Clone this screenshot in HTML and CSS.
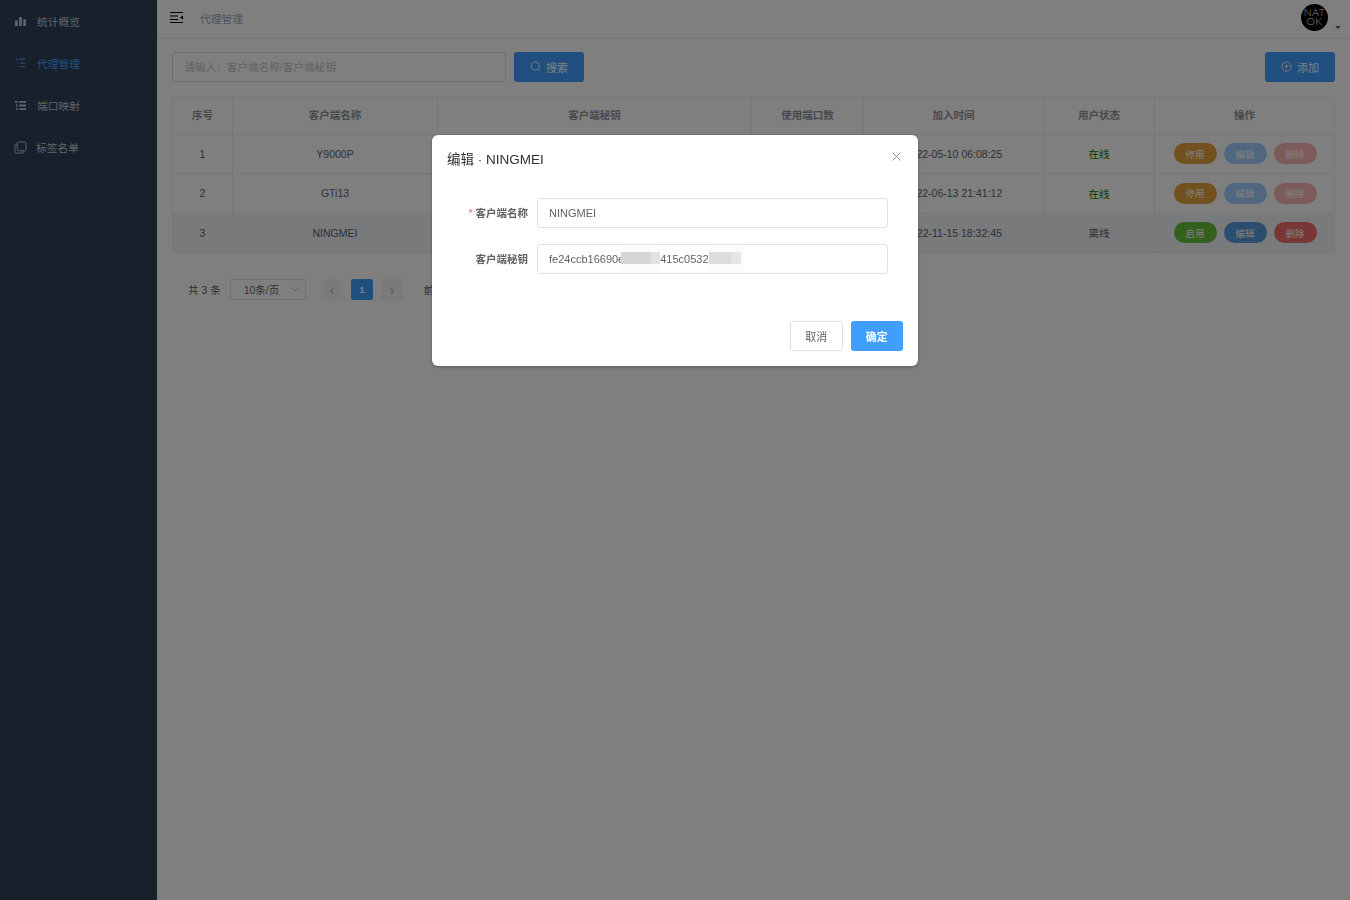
FILE: index.html
```html
<!DOCTYPE html>
<html lang="zh-CN">
<head>
  <meta charset="UTF-8">
  <title>代理管理</title>
  <link rel="stylesheet" href="styles.css">
</head>
<body>
  <div class="container">
    <div class="sidebar">
      <a href="#" class="menu-item">
        <svg class="menu-icon" viewBox="0 0 12 12"><path d="M0 5h3v6H0zM4.500 1h3v10h-3zM9 3.500h3V11H9z" fill="currentColor"/></svg>
        <span>统计概览</span>
      </a>
      <a href="#" class="menu-item active">
        <svg class="menu-icon" viewBox="0 0 12 12"><path d="M1 1.500h2M5 1.500h6M3 5.500h1M6 5.500h5M3 9.500h1M6 9.500h5" stroke="currentColor" stroke-width="1.300" fill="none"/></svg>
        <span>代理管理</span>
      </a>
      <a href="#" class="menu-item">
        <svg class="menu-icon" viewBox="0 0 12 12"><path d="M0 1h3v2H0zM4.500 1H12v2H4.500zM1 5h2v2H1zM4.500 5H12v2H4.500zM1 9h2v2H1zM4.500 9H12v2H4.500z" fill="currentColor"/></svg>
        <span>端口映射</span>
      </a>
      <a href="#" class="menu-item menu-item-tight">
        <svg class="menu-icon menu-icon-big" viewBox="0 0 14 14"><rect x="3.500" y="1" width="9.500" height="9.500" rx="1.500" fill="none" stroke="currentColor"/><path d="M3.500 3.500H2.500A1.500 1.500 0 0 0 1 5v6.500A1.500 1.500 0 0 0 2.500 13H9a1.500 1.500 0 0 0 1.500-1.500v-1" fill="none" stroke="currentColor"/></svg>
        <span>标签名单</span>
      </a>
    </div>

    <div class="main">
      <div class="navbar">
        <svg class="hamburger" viewBox="0 0 13 11"><path d="M0 .5h13M0 4h8M0 7.500h8M0 10.500h13" stroke="#000" stroke-width="1.100" fill="none"/><path d="M13 3.500v4l-3-2z" fill="#000"/></svg>
        <span class="crumb">代理管理</span>
        <div class="avatar-wrap">
          <div class="avatar"><span>NAT</span><span>OK</span></div>
          <span class="caret"></span>
        </div>
      </div>

      <div class="content">
        <div class="toolbar">
          <input class="search-input" type="text" placeholder="请输入：客户端名称/客户端秘钥">
          <button class="btn btn-primary search-btn">
            <svg class="btn-icon" viewBox="0 0 12 12"><circle cx="5.800" cy="5.500" r="4.500" fill="none" stroke="currentColor"/><path d="M9 9l1.800 1.800" stroke="currentColor"/></svg>
            搜索
          </button>
          <button class="btn btn-primary add-btn">
            <svg class="btn-icon" viewBox="0 0 12 12"><circle cx="6" cy="6" r="5" fill="none" stroke="currentColor"/><path d="M6 3.500v5M3.500 6h5" stroke="currentColor"/></svg>
            添加
          </button>
        </div>

        <table class="data-table">
          <colgroup>
            <col class="col-no"><col class="col-name"><col class="col-key"><col class="col-ports"><col class="col-time"><col class="col-state"><col class="col-ops">
          </colgroup>
          <thead>
            <tr><th>序号</th><th>客户端名称</th><th>客户端秘钥</th><th>使用端口数</th><th>加入时间</th><th>用户状态</th><th>操作</th></tr>
          </thead>
          <tbody>
            <tr>
              <td>1</td><td>Y9000P</td><td></td><td></td><td>2022-05-10 06:08:25</td>
              <td class="online">在线</td>
              <td><div class="ops"><button class="pill pill-warning">停用</button><button class="pill pill-edit-off">编辑</button><button class="pill pill-del-off">删除</button></div></td>
            </tr>
            <tr>
              <td>2</td><td>GTi13</td><td></td><td></td><td>2022-06-13 21:41:12</td>
              <td class="online">在线</td>
              <td><div class="ops"><button class="pill pill-warning">停用</button><button class="pill pill-edit-off">编辑</button><button class="pill pill-del-off">删除</button></div></td>
            </tr>
            <tr class="row-hover">
              <td>3</td><td>NINGMEI</td><td></td><td></td><td>2022-11-15 18:32:45</td>
              <td>离线</td>
              <td><div class="ops"><button class="pill pill-success">启用</button><button class="pill pill-edit">编辑</button><button class="pill pill-del">删除</button></div></td>
            </tr>
          </tbody>
        </table>

        <div class="pagination">
          <span class="total">共 3 条</span>
          <div class="page-size">10条/页<svg class="chevron" viewBox="0 0 8 5"><path d="M.5.500L4 4 7.500.500" fill="none" stroke="#c0c4cc"/></svg></div>
          <button class="page-btn">‹</button>
          <button class="page-btn page-current">1</button>
          <button class="page-btn">›</button>
          <span class="jump">前往 1 页</span>
        </div>
      </div>
    </div>
  </div>

  <div class="mask">
    <div class="dialog">
      <div class="dialog-header">
        <span class="dialog-title">编辑 · NINGMEI</span>
        <svg class="dialog-close" viewBox="0 0 9 9"><path d="M.5.500l8 8M8.500.500l-8 8" stroke="#909399" fill="none"/></svg>
      </div>
      <div class="dialog-body">
        <div class="form-item">
          <label class="form-label"><span class="required">*</span>客户端名称</label>
          <div class="form-input">NINGMEI</div>
        </div>
        <div class="form-item">
          <label class="form-label">客户端秘钥</label>
          <div class="form-input">fe24ccb16690e<span class="redact redact-a"></span>415c0532<span class="redact redact-b"></span></div>
        </div>
      </div>
      <div class="dialog-footer">
        <button class="btn btn-default">取消</button>
        <button class="btn btn-confirm">确定</button>
      </div>
    </div>
  </div>
</body>
</html>
```

FILE: styles.css
```css
* {
  box-sizing: border-box;
}

html, body {
  margin: 0;
  padding: 0;
  height: 100%;
  font-family: "Liberation Sans", "Noto Sans CJK SC", sans-serif;
  font-size: 10.5px;
  color: #606266;
  background-color: #fff;
}

button {
  font-family: inherit;
}

.container {
  display: flex;
  min-height: 100vh;
}

.sidebar {
  width: 157px;
  flex-shrink: 0;
  background-color: #304156;
}

.menu-item {
  display: flex;
  align-items: center;
  height: 42px;
  padding-left: 15px;
  gap: 11px;
  font-size: 10.75px;
  color: #bfcbd9;
  text-decoration: none;
}

.menu-item.active {
  color: #409eff;
}

.menu-item-tight {
  padding-left: 14px;
  gap: 9px;
}

.menu-icon {
  width: 11px;
  height: 11px;
}

.menu-icon-big {
  width: 13px;
  height: 13px;
}

.main {
  flex: 1;
  min-width: 0;
}

.navbar {
  display: flex;
  align-items: center;
  height: 38px;
  padding-left: 13px;
  border-bottom: 1px solid #f0f0f0;
  box-shadow: 0 1px 3px rgba(0, 21, 41, 0.05);
}

.hamburger {
  width: 13px;
  height: 11px;
  margin-top: -2px;
}

.crumb {
  margin-left: 17px;
  color: #97a8be;
  font-size: 10.75px;
}

.avatar-wrap {
  margin-left: auto;
  display: flex;
  align-items: flex-end;
  margin-right: 9px;
  margin-top: -3px;
}

.avatar {
  width: 27px;
  height: 27px;
  border-radius: 50%;
  background-color: #000;
  color: #fff;
  display: flex;
  flex-direction: column;
  align-items: center;
  justify-content: center;
  font-family: Lato, "Liberation Sans", sans-serif;
  font-weight: 300;
  font-size: 10.5px;
  line-height: 9.500px;
  letter-spacing: 0.5px;
}

.caret {
  width: 0;
  height: 0;
  margin-left: 7px;
  margin-bottom: 2px;
  border-left: 3px solid transparent;
  border-right: 3px solid transparent;
  border-top: 3.500px solid #606266;
}

.content {
  padding: 14px 15px 0;
}

.toolbar {
  display: flex;
  align-items: center;
  margin-bottom: 15px;
}

.search-input {
  width: 334px;
  height: 30px;
  padding: 0 11.500px;
  border: 1px solid #dcdfe6;
  border-radius: 3px;
  font-family: inherit;
  font-size: 10.6px;
  outline: none;
}

.search-input::placeholder {
  color: #c0c4cc;
}

.btn {
  height: 30px;
  border-radius: 3px;
  border: 1px solid transparent;
  font-size: 11px;
  display: inline-flex;
  align-items: center;
  justify-content: center;
}

.btn-primary {
  width: 70px;
  gap: 5px;
  padding-bottom: 2px;
  background-color: #409eff;
  color: #fff;
}

.btn-icon {
  width: 11px;
  height: 11px;
}

.search-btn {
  margin-left: 8px;
}

.add-btn {
  margin-left: auto;
}

.data-table {
  width: 100%;
  table-layout: fixed;
  border-collapse: collapse;
  border: 1px solid #ebeef5;
}

.col-no { width: 60px; }
.col-name { width: 205px; }
.col-key { width: 314px; }
.col-ports { width: 112px; }
.col-time { width: 180px; }
.col-state { width: 111px; }

.data-table th,
.data-table td {
  border: 1px solid #ebeef5;
  text-align: center;
  font-size: 10.500px;
  padding: 0;
}

.data-table th {
  height: 36.500px;
  padding-bottom: 2px;
  color: #909399;
  font-weight: bold;
}

.data-table td {
  height: 39.500px;
}

.row-hover td {
  background-color: #f2f5f9;
}

.data-table .online {
  color: #008000;
}

.ops {
  display: flex;
  justify-content: center;
  gap: 7px;
  padding-left: 1px;
}

.pill {
  width: 43px;
  height: 21px;
  border: 0;
  padding: 0;
  border-radius: 11px;
  font-size: 9.500px;
  color: #fff;
}

.pill-warning { background-color: #e6a23c; }
.pill-edit-off { background-color: #a0cfff; }
.pill-del-off { background-color: #fab6b6; }
.pill-success { background-color: #67c23a; }
.pill-edit { background-color: #5b9bdc; }
.pill-del { background-color: #f56c6c; }

.pagination {
  display: flex;
  align-items: center;
  height: 21px;
  margin-top: 26px;
  padding-left: 16px;
}

.total {
  margin-right: 9px;
}

.page-size {
  display: flex;
  align-items: center;
  width: 76px;
  height: 21px;
  padding-left: 13px;
  border: 1px solid #dcdfe6;
  border-radius: 2px;
  margin-right: 15px;
}

.chevron {
  width: 8px;
  height: 5px;
  margin-left: 12px;
}

.page-btn {
  width: 22.500px;
  height: 21px;
  border: 0;
  padding: 0;
  border-radius: 2px;
  margin-right: 7.500px;
  background-color: #f4f4f5;
  color: #c0c4cc;
  font-size: 14px;
  font-weight: bold;
}

.page-current {
  background-color: #409eff;
  color: #fff;
  font-size: 9.500px;
}

.jump {
  margin-left: 13px;
}

/* 弹窗 */
.mask {
  position: fixed;
  top: 0;
  left: 0;
  width: 100%;
  height: 100%;
  background-color: rgba(0, 0, 0, 0.5);
}

.dialog {
  position: relative;
  width: 486px;
  margin: 135px auto 0;
  border-radius: 6px;
  background-color: #fff;
  box-shadow: 0 1px 3px rgba(0, 0, 0, 0.3);
}

.dialog-header {
  height: 40.500px;
  padding: 16px 15px 0;
}

.dialog-title {
  font-size: 13.500px;
  line-height: 18px;
  color: #303133;
}

.dialog-close {
  position: absolute;
  top: 17px;
  right: 17px;
  width: 9px;
  height: 9px;
}

.dialog-body {
  padding: 22.500px 30px 23.500px 15px;
}

.form-item {
  display: flex;
  align-items: center;
  margin-bottom: 16px;
}

.form-label {
  width: 90px;
  padding-right: 9px;
  padding-bottom: 2px;
  text-align: right;
  font-weight: bold;
  color: #606266;
  white-space: nowrap;
}

.required {
  margin-right: 3px;
  color: #f56c6c;
  font-weight: normal;
}

.form-input {
  flex: 1;
  height: 30px;
  padding: 0 11px;
  border: 1px solid #dcdfe6;
  border-radius: 3px;
  line-height: 28px;
  font-size: 11px;
  color: #606266;
}

/* 打码 */
.redact {
  display: inline-block;
  height: 25px;
  vertical-align: top;
  margin-top: 1px;
  background-color: #fbfdfd;
}

.redact-a {
  width: 39px;
  margin-left: -3px;
  background-image: linear-gradient(to right, #d6d6d6 30px, #e2e2e2 30px);
  background-size: 100% 12px;
  background-position: 0 6px;
  background-repeat: no-repeat;
}

.redact-b {
  width: 35px;
  margin-left: 0;
  background-image: linear-gradient(to right, #dcdcdc 22px, #e6e6e6 22px);
  background-size: 32px 12px;
  background-position: 0 6px;
  background-repeat: no-repeat;
}

.dialog-footer {
  display: flex;
  justify-content: flex-end;
  gap: 8px;
  padding: 7.500px 15px 15px;
}

.dialog-footer .btn {
  width: 52.500px;
}

.btn-default {
  background-color: #fff;
  border-color: #dcdfe6;
  color: #606266;
}

.btn-confirm {
  background-color: #409eff;
  color: #fff;
  font-weight: bold;
}
```
